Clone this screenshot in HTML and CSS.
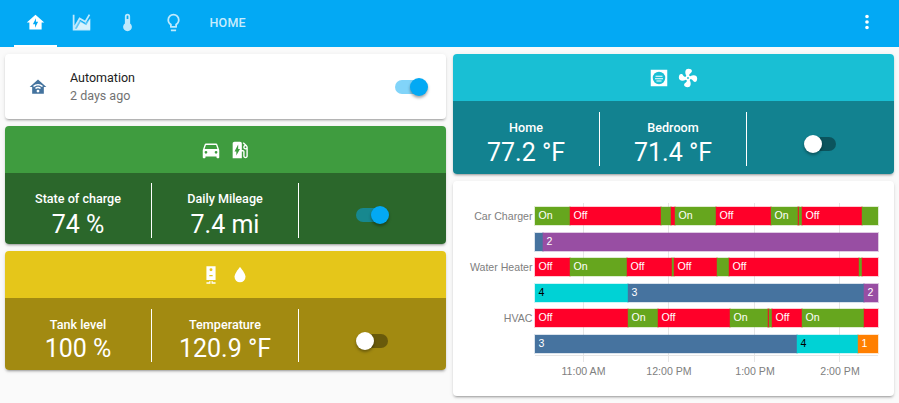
FILE: index.html
```html
<!DOCTYPE html>
<html lang="en">
<head>
    <meta charset="UTF-8">
    <meta name="viewport" content="width=device-width, initial-scale=1.0">
    <title>Home</title>
    <link rel="stylesheet" href="styles.css">
</head>
<body>
    <header class="topbar">
        <nav class="tabs">
            <div class="tab active"><svg class="icon" viewBox="0 0 24 24"><path d="M12 3L2 12H5V20H19V12H22L12 3M11.5 18V14H9L12.5 7V11H15L11.5 18Z"/></svg></div>
            <div class="tab"><svg class="icon" viewBox="0 0 24 24"><path opacity="0.5" d="M4 19L9.5 9.5L16 13.3L22 7.3V20H4Z"/><path d="M17.45,15.18L22,7.31V21H2V3H4V15.54L9.5,6L16,9.78L20.24,2.45L21.97,3.45L16.74,12.5L10.23,8.75L4.31,19H6.57L10.96,11.44L17.45,15.18Z"/></svg></div>
            <div class="tab"><svg class="icon" viewBox="0 0 24 24"><path d="M15 13V5A3 3 0 0 0 9 5V13A5 5 0 1 0 15 13M12 4A1 1 0 0 1 13 5V8H11V5A1 1 0 0 1 12 4Z"/></svg></div>
            <div class="tab"><svg class="icon" viewBox="0 0 24 24"><path d="M12,2A7,7 0 0,1 19,9C19,11.38 17.81,13.47 16,14.74V17A1,1 0 0,1 15,18H9A1,1 0 0,1 8,17V14.74C6.19,13.47 5,11.38 5,9A7,7 0 0,1 12,2M9,21V20H15V21A1,1 0 0,1 14,22H10A1,1 0 0,1 9,21M12,4A5,5 0 0,0 7,9C7,11.05 8.23,12.81 10,13.58V16H14V13.58C15.77,12.81 17,11.05 17,9A5,5 0 0,0 12,4Z"/></svg></div>
            <div class="tab tab-text">HOME</div>
        </nav>
        <svg class="icon menu" viewBox="0 0 24 24"><path d="M12,16A2,2 0 0,1 14,18A2,2 0 0,1 12,20A2,2 0 0,1 10,18A2,2 0 0,1 12,16M12,10A2,2 0 0,1 14,12A2,2 0 0,1 12,14A2,2 0 0,1 10,12A2,2 0 0,1 12,10M12,4A2,2 0 0,1 14,6A2,2 0 0,1 12,8A2,2 0 0,1 10,6A2,2 0 0,1 12,4Z"/></svg>
    </header>

    <main class="columns">
        <div class="column">
            <section class="card automation">
                <svg class="auto-icon" viewBox="0 0 24 24"><path d="M12,3L2,12H5V20H19V12H22L12,3M12,8.5C14.34,8.5 16.46,9.43 18,10.94L16.8,12.12C15.58,10.91 13.88,10.17 12,10.17C10.12,10.17 8.42,10.91 7.2,12.12L6,10.94C7.54,9.43 9.66,8.5 12,8.5M12,11.83C13.4,11.83 14.67,12.39 15.6,13.3L14.4,14.47C13.79,13.87 12.94,13.5 12,13.5C11.06,13.5 10.21,13.87 9.6,14.47L8.4,13.3C9.33,12.39 10.6,11.83 12,11.83M12,15.17C12.94,15.17 13.7,15.91 13.7,16.83C13.7,17.75 12.94,18.5 12,18.5C11.06,18.5 10.3,17.75 10.3,16.83C10.3,15.91 11.06,15.17 12,15.17Z"/></svg>
                <div class="auto-text">
                    <div class="auto-name">Automation</div>
                    <div class="auto-time">2 days ago</div>
                </div>
                <div class="toggle on"><span class="thumb"></span></div>
            </section>

            <section class="card panel green">
                <div class="panel-head">
                    <svg class="icon" viewBox="0 0 24 24"><path d="M5,11L6.5,6.5H17.5L19,11M17.5,16A1.5,1.5 0 0,1 16,14.5A1.5,1.5 0 0,1 17.5,13A1.5,1.5 0 0,1 19,14.5A1.5,1.5 0 0,1 17.5,16M6.5,16A1.5,1.5 0 0,1 5,14.5A1.5,1.5 0 0,1 6.5,13A1.5,1.5 0 0,1 8,14.5A1.5,1.5 0 0,1 6.5,16M18.92,6C18.72,5.42 18.16,5 17.5,5H6.5C5.84,5 5.28,5.42 5.08,6L3,12V20A1,1 0 0,0 4,21H5A1,1 0 0,0 6,20V19H18V20A1,1 0 0,0 19,21H20A1,1 0 0,0 21,20V12L18.92,6Z"/></svg>
                    <svg class="icon" viewBox="0 0 24 24"><path d="M19.77 7.23l.01-.01-3.72-3.72L15 4.56l2.11 2.11c-.94.36-1.61 1.26-1.61 2.33 0 1.38 1.12 2.5 2.5 2.5.36 0 .69-.08 1-.21v7.21c0 .55-.45 1-1 1s-1-.45-1-1V14c0-1.1-.9-2-2-2h-1V5c0-1.1-.9-2-2-2H6c-1.1 0-2 .9-2 2v16h10v-7.5h1.5v5c0 1.38 1.12 2.5 2.5 2.5s2.5-1.12 2.5-2.5V9c0-.69-.28-1.32-.73-1.77zM18 10c-.55 0-1-.45-1-1s.45-1 1-1 1 .45 1 1-.45 1-1 1zM8 18v-4.5H6L10 6v5h2l-4 7z"/></svg>
                </div>
                <div class="panel-body">
                    <div class="stat"><div class="stat-label">State of charge</div><div class="stat-value">74 %</div></div>
                    <div class="stat"><div class="stat-label">Daily Mileage</div><div class="stat-value">7.4 mi</div></div>
                    <div class="stat stat-switch"><div class="toggle on"><span class="thumb"></span></div></div>
                </div>
            </section>

            <section class="card panel yellow">
                <div class="panel-head">
                    <svg class="icon" viewBox="0 0 24 24"><path fill-rule="evenodd" d="M7 2.5H17V17.5H7ZM12 4.7A1.6 1.6 0 1 0 12 7.9A1.6 1.6 0 1 0 12 4.7ZM10.2 12V13.4H13.8V12ZM7 20H10.2V18.5H11.4V21.5H7ZM17 20H13.8V18.5H12.6V21.5H17Z"/></svg>
                    <svg class="icon" viewBox="0 0 24 24"><path d="M12,20A6,6 0 0,1 6,14C6,10 12,3.25 12,3.25C12,3.25 18,10 18,14A6,6 0 0,1 12,20Z"/></svg>
                </div>
                <div class="panel-body">
                    <div class="stat"><div class="stat-label">Tank level</div><div class="stat-value">100 %</div></div>
                    <div class="stat"><div class="stat-label">Temperature</div><div class="stat-value">120.9 °F</div></div>
                    <div class="stat stat-switch"><div class="toggle"><span class="thumb"></span></div></div>
                </div>
            </section>
        </div>

        <div class="column">
            <section class="card panel teal">
                <div class="panel-head">
                    <svg class="icon" viewBox="0 0 24 24"><rect x="3" y="3" width="18" height="18"/><circle cx="12" cy="12" r="6.8" fill="#19bfd4"/><path d="M8.2 9.6H15.8V10.7H8.2ZM7.6 12.2H16.4V13.3H7.6ZM9.2 14.8H14.8V15.9H9.2Z"/></svg>
                    <svg class="icon" viewBox="0 0 24 24"><path d="M12,11A1,1 0 0,0 11,12A1,1 0 0,0 12,13A1,1 0 0,0 13,12A1,1 0 0,0 12,11M12.5,2C17,2 17.11,5.57 14.75,6.75C13.76,7.24 13.32,8.29 13.13,9.22C13.61,9.42 14.03,9.73 14.35,10.13C18.05,8.13 22.03,8.92 22.03,12.5C22.03,17 18.46,17.1 17.28,14.73C16.78,13.74 15.72,13.3 14.79,13.11C14.59,13.59 14.28,14 13.88,14.34C15.87,18.03 15.08,22 11.5,22C7,22 6.91,18.42 9.27,17.24C10.25,16.75 10.69,15.71 10.89,14.79C10.4,14.59 9.97,14.27 9.65,13.87C5.96,15.85 2,15.07 2,11.5C2,7 5.56,6.89 6.74,9.26C7.24,10.25 8.29,10.68 9.22,10.87C9.41,10.39 9.73,9.97 10.14,9.65C8.15,5.96 8.94,2 12.5,2Z"/></svg>
                </div>
                <div class="panel-body">
                    <div class="stat"><div class="stat-label">Home</div><div class="stat-value">77.2 °F</div></div>
                    <div class="stat"><div class="stat-label">Bedroom</div><div class="stat-value">71.4 °F</div></div>
                    <div class="stat stat-switch"><div class="toggle"><span class="thumb"></span></div></div>
                </div>
            </section>

            <section class="card timeline">
                <div class="grid">
                    <div class="tick" style="left:47.5px"><span>11:00 AM</span></div>
                    <div class="tick" style="left:133px"><span>12:00 PM</span></div>
                    <div class="tick" style="left:219px"><span>1:00 PM</span></div>
                    <div class="tick" style="left:304px"><span>2:00 PM</span></div>
                </div>
                <div class="row">
                    <div class="row-label">Car Charger</div>
                    <div class="bars">
                        <div class="seg g" style="width:35px">On</div><div class="seg r" style="width:91px">Off</div><div class="seg g" style="width:10px"></div><div class="seg r" style="width:4px"></div><div class="seg g" style="width:41px">On</div><div class="seg r" style="width:55px">Off</div><div class="seg g" style="width:27px">On</div><div class="seg r" style="width:1px"></div><div class="seg g" style="width:3px"></div><div class="seg r" style="width:60px">Off</div><div class="seg g" style="width:16px"></div>
                    </div>
                </div>
                <div class="row">
                    <div class="row-label"></div>
                    <div class="bars">
                        <div class="seg b" style="width:8px"></div><div class="seg p" style="width:335px">2</div>
                    </div>
                </div>
                <div class="row">
                    <div class="row-label">Water Heater</div>
                    <div class="bars">
                        <div class="seg r" style="width:35px">Off</div><div class="seg g" style="width:57px">On</div><div class="seg r" style="width:45px">Off</div><div class="seg g" style="width:2px"></div><div class="seg r" style="width:43px">Off</div><div class="seg g" style="width:12px"></div><div class="seg r" style="width:130px">Off</div><div class="seg g" style="width:3px"></div><div class="seg r" style="width:16px"></div>
                    </div>
                </div>
                <div class="row">
                    <div class="row-label"></div>
                    <div class="bars">
                        <div class="seg c" style="width:93px">4</div><div class="seg b" style="width:236px">3</div><div class="seg p" style="width:14px">2</div>
                    </div>
                </div>
                <div class="row">
                    <div class="row-label">HVAC</div>
                    <div class="bars">
                        <div class="seg r" style="width:93px">Off</div><div class="seg g" style="width:30px">On</div><div class="seg r" style="width:72px">Off</div><div class="seg g" style="width:38px">On</div><div class="seg r" style="width:1px"></div><div class="seg g" style="width:3px"></div><div class="seg r" style="width:30px">Off</div><div class="seg g" style="width:62px">On</div><div class="seg r" style="width:14px"></div>
                    </div>
                </div>
                <div class="row">
                    <div class="row-label"></div>
                    <div class="bars">
                        <div class="seg b" style="width:262px">3</div><div class="seg c" style="width:61px">4</div><div class="seg o" style="width:20px">1</div>
                    </div>
                </div>
            </section>
        </div>
    </main>
</body>
</html>
```

FILE: styles.css
```css
* {
    box-sizing: border-box;
}
html, body {
    height: 100%;
}
body {
    margin: 0;
    background-color: #fafafa;
    font-family: Roboto, sans-serif;
    overflow: hidden;
}
.icon {
    width: 22px;
    height: 22px;
    fill: white;
    display: block;
}

/* top bar */
.topbar {
    height: 47px;
    background-color: #03a9f4;
    display: flex;
    align-items: center;
    justify-content: space-between;
    padding: 0 21px 0 12.5px;
}
.tabs {
    display: flex;
    height: 100%;
}
.tab {
    width: 43px;
    margin: 0 1.5px;
    display: flex;
    align-items: center;
    justify-content: center;
    border-bottom: 2px solid transparent;
}
.tab .icon {
    width: 21px;
    height: 21px;
    fill: rgba(255,255,255,0.75);
}
.tab.active {
    border-bottom-color: white;
}
.tab.active .icon {
    fill: white;
}
.tab-text {
    width: auto;
    margin-left: 13px;
    color: rgba(255,255,255,0.8);
    font-size: 12.5px;
    font-weight: 500;
    letter-spacing: 0.2px;
}
.menu {
    margin-bottom: 3px;
}

/* layout */
.columns {
    display: grid;
    grid-template-columns: 441px 441px;
    column-gap: 7px;
    padding: 7px 5px 0;
}
.column {
    display: flex;
    flex-direction: column;
    gap: 7px;
}
.card {
    background: white;
    border-radius: 4px;
    box-shadow: 0 2px 2px rgba(0,0,0,0.14), 0 1px 5px rgba(0,0,0,0.08), 0 3px 1px -2px rgba(0,0,0,0.14);
    overflow: hidden;
}

/* automation row */
.automation {
    height: 65px;
    display: flex;
    align-items: center;
    padding: 0 19px 0 23px;
}
.auto-icon {
    width: 20px;
    height: 20px;
    fill: #44739e;
    margin-right: 22px;
}
.auto-text {
    flex: 1;
    font-size: 12.5px;
    line-height: 18px;
}
.auto-name {
    color: #212121;
}
.auto-time {
    color: #727272;
}

/* coloured panels */
.panel-head {
    height: 47px;
    display: flex;
    align-items: center;
    justify-content: center;
    gap: 7px;
}
.panel-body {
    height: 71px;
    display: grid;
    grid-template-columns: 147px 147px 1fr;
    padding: 10px 0 11px;
    color: white;
}
.stat {
    border-right: 1px solid white;
    text-align: center;
    display: flex;
    flex-direction: column;
    padding-top: 7.5px;
}
.stat-label {
    font-size: 12.6px;
    font-weight: 500;
    line-height: 16px;
}
.stat-value {
    font-size: 25px;
    line-height: 26px;
    margin-top: 3.5px;
}
.green .stat-value {
    margin-top: 5px;
}
.teal .stat-value {
    margin-top: 4.5px;
}
.stat-switch {
    border-right: none;
    align-items: center;
    justify-content: center;
    padding: 10px 2px 0 0;
}
.green .panel-head { background-color: #3f9c3f; }
.green .panel-body { background-color: #2b672b; }
.yellow .panel-head { background-color: #e5c61a; }
.yellow .panel-body { background-color: #a28a11; height: 72px; padding-top: 11px; padding-bottom: 12px; }
.teal .panel-head { background-color: #19bfd4; }
.teal .panel-body { background-color: #128290; height: 73px; padding-top: 11px; padding-bottom: 12px; }

/* toggle */
.toggle {
    width: 32px;
    height: 14px;
    border-radius: 7px;
    background-color: rgba(0,0,0,0.35);
    display: flex;
    align-items: center;
}
.thumb {
    width: 18px;
    height: 18px;
    flex: none;
    border-radius: 50%;
    background: white;
    box-shadow: 0 2px 3px rgba(0,0,0,0.35);
}
.toggle.on {
    justify-content: flex-end;
    background-color: rgba(3,169,244,0.5);
}
.toggle.on .thumb {
    background-color: #03a9f4;
    margin-right: -1px;
}

/* timeline chart */
.timeline {
    height: 215px;
    position: relative;
    padding-top: 26px;
    display: flex;
    flex-direction: column;
    gap: 7.5px;
    color: #808080;
    font-family: "Liberation Sans", Arial, sans-serif;
    font-size: 10.6px;
}
.grid {
    position: absolute;
    left: 82px;
    top: 22px;
    width: 343px;
    height: 153px;
    border-bottom: 1px solid #e6e6e6;
}
.tick {
    position: absolute;
    top: 0;
    bottom: -7px;
    border-left: 1px solid #e6e6e6;
}
.tick span {
    position: absolute;
    top: 162px;
    left: 0;
    transform: translateX(-50%);
    white-space: nowrap;
}
.row {
    position: relative;
    display: flex;
    height: 18px;
    align-items: center;
}
.row-label {
    width: 79.5px;
    margin-right: 2.5px;
    margin-bottom: 1px;
    text-align: right;
}
.bars {
    display: flex;
    width: 343px;
    height: 18px;
}
.seg {
    height: 18px;
    line-height: 17px;
    color: white;
    white-space: nowrap;
    overflow: hidden;
    flex: none;
}
.seg:not(:empty) {
    padding-left: 3.5px;
}
.g { background-color: #66a61e; box-shadow: 0 0 0 1px rgba(102,166,30,0.2); }
.r { background-color: #ff0029; box-shadow: 0 0 0 1px rgba(255,0,41,0.2); }
.p { background-color: #984ea3; box-shadow: 0 0 0 1px rgba(152,78,163,0.3); }
.b { background-color: #46739f; box-shadow: 0 0 0 1px rgba(70,115,159,0.2); }
.seg.c { background-color: #00d2d5; box-shadow: 0 0 0 1px rgba(0,210,213,0.2); color: black; }
.o { background-color: #ff7f00; box-shadow: 0 0 0 1px rgba(255,127,0,0.2); }
```
